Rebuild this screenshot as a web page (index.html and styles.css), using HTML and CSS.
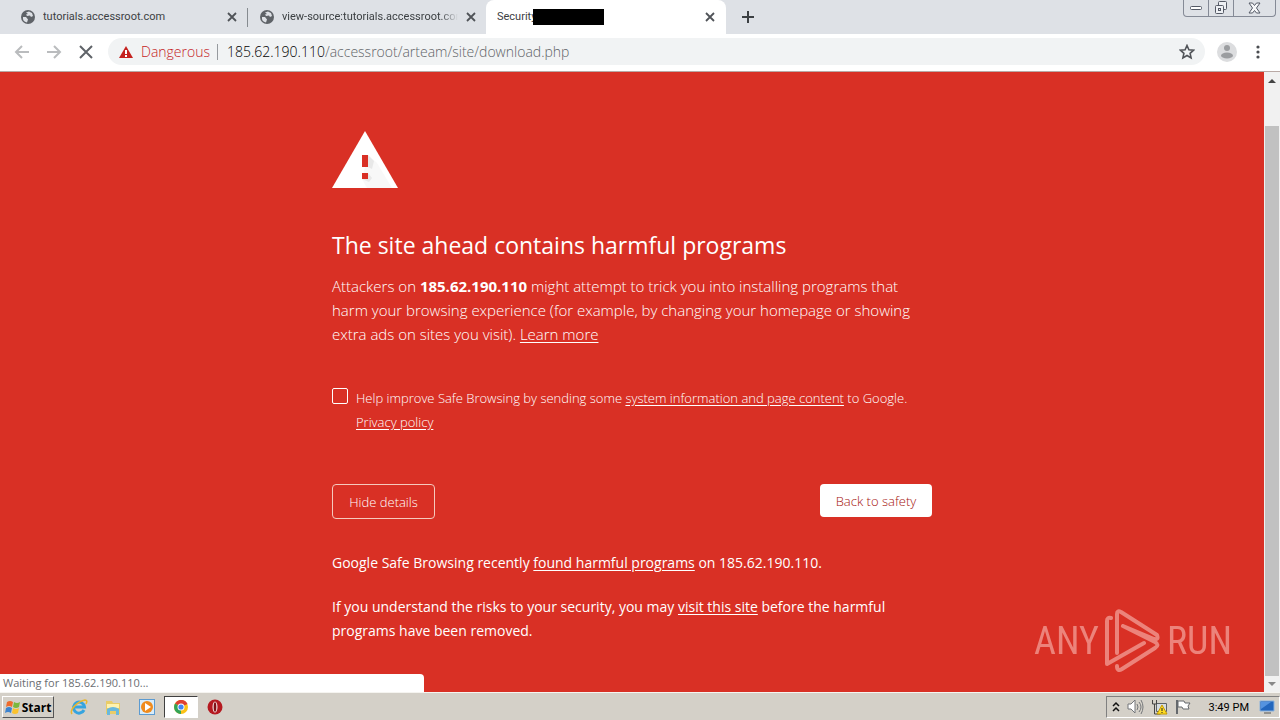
FILE: index.html
```html
<!DOCTYPE html>
<html lang="en">
<head>
<meta charset="utf-8">
<title>Security error</title>
<link rel="stylesheet" href="styles.css">
</head>
<body>
<svg class="defs" aria-hidden="true">
  <symbol id="globe" viewBox="0 0 14 14"><circle cx="7" cy="7" r="7" fill="#5f6368"/><path d="M2 7l3 0 2 2.500-1 3C3 12 1.500 10 2 7zM5 2.500l3-1 3 1.500 1 3-2 1-1-1.500-3 .5-1-1.500 2-.5z" fill="#dee1e6"/></symbol>
  <symbol id="cross" viewBox="0 0 10 10"><path d="M1 1l8 8M9 1 1 9" stroke="#505358" stroke-width="1.800"/></symbol>
</svg>
<div class="window">
  <header class="tabs">
    <div class="tab"><svg class="globe"><use href="#globe"/></svg><span class="tab-title">tutorials.accessroot.com</span><button class="close" aria-label="Close tab"><svg><use href="#cross"/></svg></button></div>
    <div class="tab divided"><svg class="globe"><use href="#globe"/></svg><span class="tab-title fade">view-source:tutorials.accessroot.com</span><button class="close" aria-label="Close tab"><svg><use href="#cross"/></svg></button></div>
    <div class="tab active"><span class="tab-title">Security<i class="redaction"></i></span><button class="close" aria-label="Close tab"><svg><use href="#cross"/></svg></button></div>
    <button class="new-tab" aria-label="New tab"><svg width="12" height="12"><path d="M6 0v12M0 6h12" stroke="#3c4043" stroke-width="2"/></svg></button>
    <div class="controls">
      <button aria-label="Minimize"><svg width="12" height="6"><rect x=".5" y="1.500" width="11" height="3" rx="1" fill="#fff" stroke="#555a66"/></svg></button>
      <button aria-label="Restore"><svg width="14" height="14" fill="#eef0f4" stroke="#555a66"><rect x="4.500" y=".5" width="8" height="8" rx="1"/><rect x="1.500" y="4.500" width="8" height="8" rx="1"/><rect x="4.500" y="7.500" width="2" height="2"/></svg></button>
      <button class="wide" aria-label="Close"><svg width="13" height="12"><path d="M1 1h3.500L6.500 3.500 8.500 1H12L8.500 6 12 11H8.500L6.500 8.500 4.500 11H1L4.500 6z" fill="#f6f7f9" stroke="#555a66"/></svg></button>
    </div>
  </header>
  <nav class="toolbar">
    <button aria-label="Back"><svg width="16" height="16" fill="none" stroke="#babcbe" stroke-width="2"><path d="M15 8H2M8 2 2 8l6 6"/></svg></button>
    <button aria-label="Forward"><svg width="16" height="16" fill="none" stroke="#babcbe" stroke-width="2"><path d="M1 8h13M8 2l6 6-6 6"/></svg></button>
    <button aria-label="Stop"><svg width="16" height="16" fill="none" stroke="#5f6368" stroke-width="2"><path d="M2 2l12 12M14 2 2 14"/></svg></button>
    <div class="address">
      <svg width="16" height="14"><path d="M8 1l7 12H1z" fill="#c5221f"/><path d="M8 5v4M8 10v2" stroke="#fff" stroke-width="2"/></svg>
      <span class="danger">Dangerous</span>
      <span class="url"><b>185.62.190.110</b>/accessroot/arteam/site/download.php</span>
      <button aria-label="Bookmark"><svg width="16" height="16"><path d="M8 1.500l1.900 4.300 4.700.4-3.500 3.100 1 4.600L8 11.500l-4.100 2.400 1-4.600-3.500-3.100 4.700-.4z" fill="none" stroke="#505358" stroke-width="1.600"/></svg></button>
    </div>
    <button class="profile" aria-label="Profile"><svg width="20" height="20"><circle cx="10" cy="10" r="10" fill="#dcdddf"/><circle cx="10" cy="6" r="3" fill="#9b9da0"/><ellipse cx="10" cy="13.500" rx="6" ry="3" fill="#9b9da0"/></svg></button>
    <button aria-label="Menu"><svg width="4" height="14" fill="#4a4d51"><circle cx="2" cy="2" r="1.600"/><circle cx="2" cy="7" r="1.600"/><circle cx="2" cy="12" r="1.600"/></svg></button>
  </nav>
  <div class="view">
    <main class="page">
      <div class="content">
        <svg class="warning" width="66" height="57"><path d="M33 0l33 57H0z" fill="#fff"/><path d="M36 24l9 8 15 25H35l-5-9z" fill="#f8f8f8"/><path d="M36 24l6 6-2 8-4-2zM36 42l4 5-3 4-7-3z" fill="#e8e8e8"/><path d="M30 24h6v12h-6zM30 42h6v6h-6z" fill="#d93025"/></svg>
        <h1>The site ahead contains harmful programs</h1>
        <p class="intro">Attackers on <strong>185.62.190.110</strong> might attempt to trick you into installing programs that<br>harm your browsing experience (for example, by changing your homepage or showing<br>extra ads on sites you visit). <a href="#">Learn more</a></p>
        <div class="opt"><input type="checkbox" id="report"><label for="report">Help improve Safe Browsing by sending some <a href="#">system information and page content</a> to Google.<br><a href="#">Privacy policy</a></label></div>
        <div class="actions"><button class="details">Hide details</button><button class="safety">Back to safety</button></div>
        <p class="more">Google Safe Browsing recently <a href="#">found harmful programs</a> on 185.62.190.110.</p>
        <p class="more">If you understand the risks to your security, you may <a href="#">visit this site</a> before the harmful<br>programs have been removed.</p>
      </div>
    </main>
    <aside class="scroll"><svg width="16" height="18"><path d="M4 11l4-4 4 4z" fill="#444"/></svg><div class="thumb"></div><svg width="16" height="16"><path d="M4 6l4 4 4-4z" fill="#888"/></svg></aside>
    <div class="status">Waiting for 185.62.190.110...</div>
    <div class="watermark"><span>ANY</span><svg width="56" height="64" fill="none" stroke="currentColor" stroke-width="4" stroke-linejoin="round" stroke-linecap="round"><path d="M6 9Q2 8 2 12V55L39 34M18 17 49 30Q54 31 52 26L16 3Q12 1 12 5V44M18 17 50 33Q55 36 50 39L17 60Q12 63 12 57"/></svg><span>RUN</span></div>
  </div>
  <footer class="taskbar">
    <button class="start"><svg width="15" height="16"><path d="M2 3q3-2 6 0L7 8Q4 6 1 8z" fill="#ef6b2c"/><path d="M9 3q3 2 6 0l-1 5q-3 2-6 0z" fill="#7bb83d"/><path d="M1 9q3-2 6 0l-1 5q-3-2-6 0z" fill="#3c83cf"/><path d="M8 9q3 2 6 0l-1 5q-3 2-6 0z" fill="#fbc22c"/></svg>Start</button>
    <button aria-label="Internet Explorer"><svg width="18" height="18" fill="none"><path d="M14 12a5.500 5.500 0 1 1 .5-3H5" stroke="#36a4df" stroke-width="3"/><path d="M2 16C-1 12 8 3 15 2q3 0 1 4" stroke="#e9b62e" stroke-width="1.500"/></svg></button>
    <button aria-label="Explorer"><svg width="18" height="18"><path d="M2 3h6l1 2h7v11H2z" fill="#e9cc68"/><path d="M3 6h12v4H3z" fill="#fff2ae"/><path d="M3 17v-6q6-4 12 0v6h-3v-4H6v4z" fill="#69b8dd"/></svg></button>
    <button aria-label="Media Player"><svg width="18" height="18"><rect x="1.500" y="1.500" width="15" height="15" fill="#d8ecfa" stroke="#5c9bd1"/><circle cx="9" cy="9" r="6" fill="#f08b1d"/><path d="M7 5l6 4-6 4z" fill="#fff"/></svg></button>
    <button class="running" aria-label="Chrome"><svg width="14" height="14"><circle cx="7" cy="7" r="7" fill="#fbc116"/><path d="M7 7 1 3.500A7 7 0 0 1 13.500 4z" fill="#df4032"/><path d="M1 3.500 7 7l0 7A7 7 0 0 1 1 3.500z" fill="#33a457"/><circle cx="7" cy="7" r="3.500" fill="#fff"/><circle cx="7" cy="7" r="2.600" fill="#4285f4"/></svg></button>
    <button aria-label="Opera"><svg width="16" height="16"><circle cx="8" cy="8" r="7.500" fill="#b51920"/><ellipse cx="8" cy="8" rx="2.500" ry="5.500" fill="#f3dddd"/><ellipse cx="8" cy="8" rx="1.300" ry="4.800" fill="#801015"/></svg></button>
    <div class="tray">
      <svg width="8" height="12" fill="none" stroke="#111" stroke-width="1.500"><path d="M1 5l3-3 3 3M1 10l3-3 3 3"/></svg>
      <svg width="17" height="16" fill="#fff" stroke="#74777a"><path d="M1 5h3l4-4v13l-4-4H1z"/><path d="M10 5q2 3 0 6M12 3q4 5 0 10M14 1q4 7 0 14" fill="none"/></svg>
      <svg width="17" height="17"><path d="M5.500 4.500h10v8h-10z" fill="#d5dbe0" stroke="#5d6367"/><path d="M1.500 1v4h4V1M3.500 5v10h6" fill="none" stroke="#444"/><path d="M11 6l5 9H6z" fill="#ffdc23" stroke="#c49a00"/><path d="M11 9v3M11 13v1" stroke="#222"/></svg>
      <svg width="16" height="16" fill="#fff" stroke="#65696d"><path d="M2 1v14" stroke-width="2"/><path d="M3 2h6l1 2h5l-2 3 1 3H8L7 8H3z"/></svg>
      <time>3:49 PM</time>
      <svg width="16" height="14"><path d="M1 1h14v10H1z" fill="#2366bd" stroke="#8bb2dd"/><path d="M2 2h10L2 9z" fill="#5593df"/><path d="M5 13h7" stroke="#555"/></svg>
    </div>
  </footer>
</div>
</body>
</html>
```
FILE: styles.css
```css
* { box-sizing: border-box; }
body { margin: 0; font-family: "Open Sans", "Noto Sans", sans-serif; overflow: hidden; }
button { border: 0; padding: 0; background: none; font: inherit; color: inherit; display: flex; align-items: center; justify-content: center; }
svg { display: block; flex: none; }
.defs { position: absolute; width: 0; height: 0; }
.window { height: 100vh; display: flex; flex-direction: column; }

.tabs { height: 34px; flex: none; display: flex; background: #dee1e6; padding-left: 8px; color: #3c4043; font: 11px Roboto, sans-serif; }
.tab { width: 239px; display: flex; align-items: center; gap: 8px; padding: 0 10px 0 13px; }
.tab.divided { background: linear-gradient(#868b90, #868b90) left 8px / 1px 19px no-repeat; }
.globe { width: 14px; height: 14px; }
.tab-title { flex: 1; min-width: 0; line-height: 16px; white-space: nowrap; overflow: hidden; position: relative; }
.fade { mask-image: linear-gradient(90deg, #000 90%, transparent); }
.close, .close svg { width: 10px; height: 10px; }
.active { width: 240px; background: #fff; border-radius: 8px 8px 0 0; padding: 0 11px; }
.redaction { position: absolute; left: 36px; top: 0; width: 71px; height: 16px; background: #000; }
.new-tab { width: 44px; }
.controls { margin: 0 4px 0 auto; height: 17px; display: flex; border: 1px solid #858a96; border-top: 0; border-radius: 0 0 4px 4px; }
.controls button { width: 25px; border-right: 1px solid #858a96; }
.controls .wide { width: 41px; border: 0; }

.toolbar { height: 38px; flex: none; display: flex; align-items: center; gap: 16px; padding: 0 20px 2px 14px; background: #fff; border-bottom: 1px solid #b9a9a5; }
.address { flex: 1; height: 27px; display: flex; align-items: center; gap: 7px; padding: 0 10px; margin-left: -2px; border-radius: 14px; background: #f1f3f4; font-size: 14px; font-weight: 300; white-space: nowrap; }
.danger { color: #c5221f; padding-right: 7px; border-right: 1px solid #969a9e; line-height: 16px; }
.url { flex: 1; color: #5f6367; padding-left: 2px; }
.url b { color: #000; font-weight: 300; }
.profile { margin: 0 3px 0 -4px; }

.view { position: relative; flex: 1; min-height: 0; display: flex; }
.page { flex: 1; background: #d93025; color: #fff; overflow: hidden; }
.content { width: 100%; max-width: 600px; margin: 0 auto; padding-top: 59px; font-size: 15px; line-height: 24px; font-weight: 300; white-space: nowrap; }
.content a { color: inherit; text-underline-offset: 2px; }
h1 { font-size: 23px; line-height: 28px; font-weight: 400; margin: 43px 0 15px; }
p { margin: 0; }
.intro strong { font-weight: 700; }
.opt { display: flex; gap: 8px; margin-top: 40px; font-size: 13px; }
.opt input { appearance: none; flex: none; width: 16px; height: 16px; margin: 2px 0 0; border: 1px solid #fff; border-radius: 2px; }
.actions { display: flex; justify-content: space-between; align-items: flex-start; margin: 50px 0 32px; font-size: 13px; }
.details { width: 103px; height: 35px; border: 1px solid #f6c9bd; border-radius: 4px; }
.safety { width: 112px; height: 33px; border-radius: 4px; background: #fff; color: #a5120c; }
.more { font-size: 14px; font-weight: 400; }
.more + .more { margin-top: 20px; }
.scroll { width: 16px; background: #f1f1f1; display: flex; flex-direction: column; }
.thumb { flex: 1; margin: 36px 1px 0; background: #c1c1c1; }
.status { position: absolute; left: 0; bottom: 0; width: 424px; height: 18px; padding-left: 3px; background: #fff; border-radius: 0 4px 0 0; color: #6b6e72; font-size: 11px; line-height: 18px; }
.watermark { position: absolute; right: 48px; bottom: 19px; display: flex; align-items: center; gap: 6px; color: #f0928a; font: 38px "Roboto Condensed", Roboto, sans-serif; opacity: .85; }

.taskbar { height: 28px; flex: none; display: flex; align-items: center; background: #d4d0c8; border-top: 1px solid #f5f4f0; padding: 1px 0 0 2px; }
.taskbar > button { width: 34px; height: 22px; }
.taskbar > .start { width: 52px; gap: 2px; margin-right: 8px; border: 1px solid; border-color: #fff #555 #555 #fff; font-size: 12px; font-weight: 700; }
.taskbar > .running { background: #fff; border: 1px solid; border-color: #404040 #fff #fff #404040; }
.tray { margin-left: auto; height: 22px; display: flex; align-items: center; gap: 7px; padding: 0 4px 0 5px; border: 1px solid; border-color: #808080 #fff #fff #808080; font: 11px Roboto, sans-serif; }
.tray time { margin: 0 3px 0 11px; }
```
